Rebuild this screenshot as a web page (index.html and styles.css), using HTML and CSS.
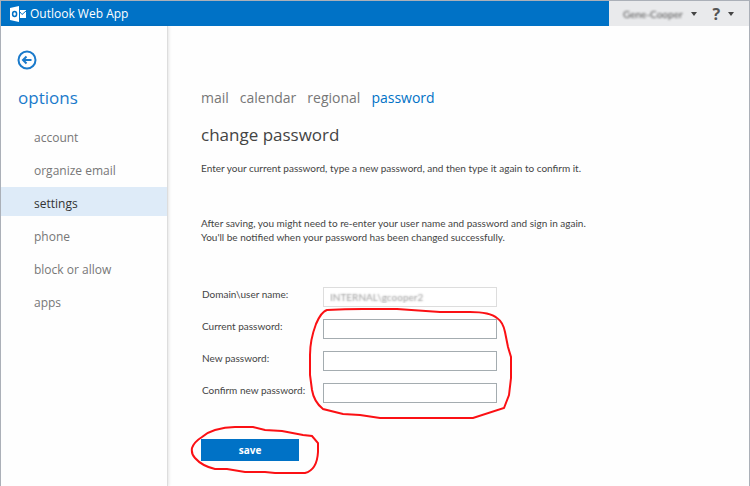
FILE: index.html
```html
<!DOCTYPE html>
<html lang="en">
<head>
  <meta charset="UTF-8" />
  <meta name="viewport" content="width=device-width, initial-scale=1.0" />
  <title>Outlook Web App</title>
  <link rel="stylesheet" href="styles.css">
</head>
<body>
  <header class="topbar">
    <div class="brand">
      <svg class="logo" viewBox="0 0 16 16" width="16" height="16" aria-hidden="true">
        <path d="M0 2 L9 0 V16 L0 14 Z" fill="#fff" />
        <ellipse cx="4.6" cy="8" rx="2" ry="2.5" fill="none" stroke="#0072c6" stroke-width="1.5" />
        <path d="M10 4 H16 V12 H10 Z" fill="#fff" />
        <path d="M10 6 L12 8.5 L16 5" fill="none" stroke="#0072c6" stroke-width="1" />
      </svg>
      <span>Outlook Web App</span>
    </div>
    <div class="user-menu">
      <button class="user-btn" type="button">
        <span class="blurred">Gene-Cooper</span>
        <svg class="caret" viewBox="0 0 6 4" width="6" height="4" aria-hidden="true"><path d="M0 0 H6 L3 4 Z" /></svg>
      </button>
      <button class="help-btn" type="button">
        <span class="help-mark">?</span>
        <svg class="caret" viewBox="0 0 6 4" width="6" height="4" aria-hidden="true"><path d="M0 0 H6 L3 4 Z" /></svg>
      </button>
    </div>
  </header>

  <div class="page">
    <aside class="sidebar">
      <a class="back" href="#" aria-label="Back">
        <svg viewBox="0 0 20 20" width="20" height="20" aria-hidden="true">
          <circle cx="10" cy="10" r="8.5" />
          <path d="M14.5 10 H6 M9.5 6.5 L6 10 L9.5 13.5" />
        </svg>
      </a>
      <h2>options</h2>
      <nav class="side-nav">
        <a href="#">account</a>
        <a href="#">organize email</a>
        <a href="#" class="active">settings</a>
        <a href="#">phone</a>
        <a href="#">block or allow</a>
        <a href="#">apps</a>
      </nav>
    </aside>

    <main class="content">
      <nav class="tabs">
        <a href="#">mail</a>
        <a href="#">calendar</a>
        <a href="#">regional</a>
        <a href="#" class="active">password</a>
      </nav>
      <h1>change password</h1>
      <p class="intro">Enter your current password, type a new password, and then type it again to confirm it.</p>
      <p class="note">After saving, you might need to re-enter your user name and password and sign in again.<br>You'll be notified when your password has been changed successfully.</p>

      <form class="password-form">
        <div class="row">
          <label for="username">Domain\user name:</label>
          <input class="username" type="text" id="username" value="INTERNAL\gcooper2" disabled>
        </div>
        <div class="required">
          <div class="row">
            <label for="current">Current password:</label>
            <input type="password" id="current">
          </div>
          <div class="row">
            <label for="new">New password:</label>
            <input type="password" id="new">
          </div>
          <div class="row">
            <label for="confirm">Confirm new password:</label>
            <input type="password" id="confirm">
          </div>
          <svg class="mark mark-fields" viewBox="305 305 210 118" width="210" height="118" aria-hidden="true">
            <path d="M327 310 Q345 309 363 309 L397 309 L440 312 H470 Q490 312 497 318 Q503 322 505 332 L508 347 L511 357 V378 L509 395 L504 408 L473 418 H380 L360 415 L343 414 L323 409 Q314 402 312 390 L310 375 V355 Q310 340 316 324 Q321 312 327 310 Z" />
          </svg>
        </div>
        <div class="actions">
          <button class="save" type="submit">save</button>
          <svg class="mark mark-save" viewBox="187 422 136 56" width="136" height="56" aria-hidden="true">
            <path d="M192 448 Q194 442 202 437 Q208 432 215 430 Q225 427 235 427 H253 L265 430 L282 431 L303 435 L312 436 L318 443 V452 Q317 470 305 473 H275 L265 472 H245 L227 469 H215 Q202 466 195 458 Q191 454 192 448 Z" />
          </svg>
        </div>
      </form>
    </main>
  </div>
</body>
</html>
```

FILE: styles.css
```css
* {
  box-sizing: border-box;
}
body {
  margin: 0;
  min-height: 100vh;
  display: flex;
  flex-direction: column;
  border: 1px solid #abb0b8;
  border-bottom: none;
  background: #fefefe;
  color: #444;
  font-family: "Segoe UI", "Open Sans", "Noto Sans", sans-serif;
  font-size: 12px;
  line-height: 14px;
}
a {
  color: inherit;
  text-decoration: none;
}
button {
  font-family: inherit;
  border: none;
  cursor: pointer;
}

/* top bar */
.topbar {
  display: flex;
  justify-content: space-between;
  height: 25px;
  background: #0072c6;
}
.brand {
  display: flex;
  align-items: center;
  gap: 4px;
  padding-left: 9px;
  color: #fff;
}
.user-menu {
  display: flex;
  align-items: center;
  gap: 16px;
  width: 140px;
  padding-left: 14px;
  background: #e9eaec;
}
.user-menu button {
  display: flex;
  align-items: center;
  gap: 8px;
  padding: 0;
  background: none;
  color: #555;
}
.user-menu .blurred {
  filter: blur(1px);
  font-family: "Segoe UI", Lato, sans-serif;
  font-size: 10px;
}
.user-menu .help-mark {
  font-size: 16px;
  font-weight: bold;
}
.caret {
  fill: #444;
}

/* left column */
.page {
  display: flex;
  flex: 1;
}
.sidebar {
  width: 167px;
  flex-shrink: 0;
  padding-top: 24px;
  border-right: 1px solid #ddd;
  box-shadow: 1px 0 3px rgba(0, 0, 0, 0.1);
}
.back {
  display: block;
  width: 20px;
  height: 20px;
  margin-left: 16px;
}
.back svg {
  display: block;
  fill: none;
  stroke: #1a7acb;
  stroke-width: 2;
}
.sidebar h2 {
  margin: 16px 0 11px 17px;
  color: #1a7acb;
  font-size: 17px;
  font-weight: normal;
  line-height: 24px;
}
.side-nav {
  display: flex;
  flex-direction: column;
  gap: 4px;
}
.side-nav a {
  padding: 4px 0 0 33px;
  color: #777;
  line-height: 25px;
}
.side-nav .active {
  background: #deebf8;
  color: #333;
}

/* main column */
.content {
  flex: 1;
  padding: 62px 20px 0 33px;
}
.tabs {
  display: flex;
  gap: 11px;
  color: #777;
  font-size: 14px;
  line-height: 20px;
}
.tabs .active {
  color: #0072c6;
}
h1 {
  margin: 14px 0 13px;
  color: #444;
  font-size: 17px;
  font-weight: normal;
  line-height: 26px;
}
p {
  margin: 0;
  font-family: "Segoe UI", Lato, sans-serif;
  font-size: 10px;
}
.note {
  margin-top: 41px;
}

/* form */
.password-form {
  display: flex;
  flex-direction: column;
  gap: 12px;
  margin-top: 43px;
}
.row {
  display: flex;
  font-family: "Segoe UI", Lato, sans-serif;
  font-size: 10px;
}
.row label {
  width: 122px;
  padding-left: 1px;
  white-space: nowrap;
}
.row input {
  width: 174px;
  height: 20px;
  padding: 0 6px;
  border: 1px solid #a4acb0;
  background: #fff;
  font: inherit;
}
.row .username {
  border-color: #ddd;
  color: transparent;
  text-shadow: 0 0 2px #999;
}
.required {
  position: relative;
  display: flex;
  flex-direction: column;
  gap: 12px;
}
.actions {
  position: relative;
  margin-top: 24px;
}
.save {
  display: block;
  width: 98px;
  height: 22px;
  padding: 0;
  background: #0072c6;
  color: #fff;
  font-size: 10px;
  font-weight: bold;
}

/* red pen marks */
.mark {
  position: absolute;
  fill: none;
  stroke: #fb1014;
  stroke-width: 2;
  pointer-events: none;
}
.mark-fields {
  top: -14px;
  left: 104px;
}
.mark-save {
  top: -17px;
  left: -14px;
}
```
